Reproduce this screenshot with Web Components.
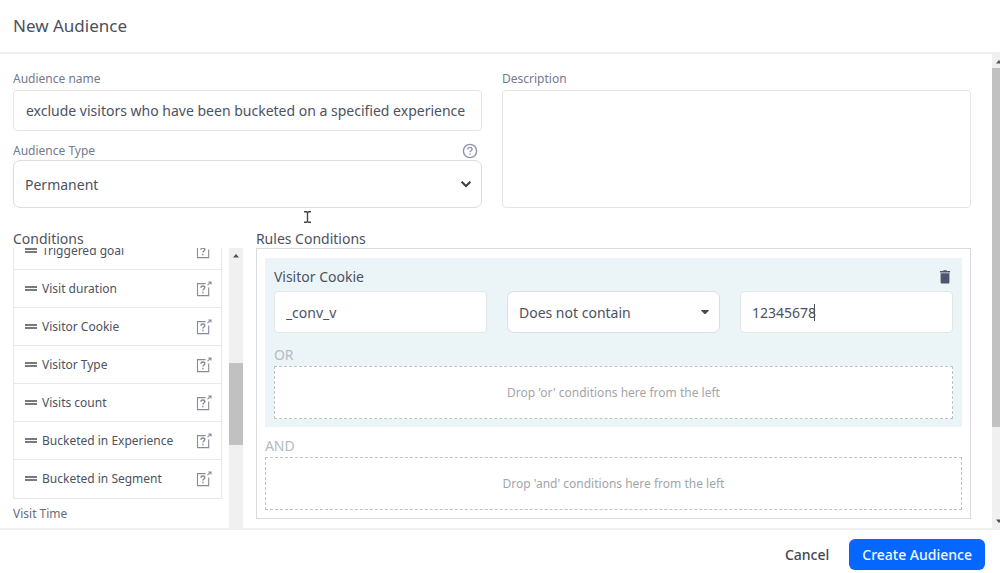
<!DOCTYPE html>
<html lang="en">
<head>
<meta charset="utf-8">
<title>New Audience</title>
<style>
html, body { height: 100%; margin: 0; }
body { background: #fff; color: #4c525f; font: 14px/20px "Noto Sans", "Open Sans", sans-serif; overflow: hidden; }
</style>
</head>
<body>
<audience-dialog></audience-dialog>

<template id="t-dialog">
<style>
:host { display: flex; flex-direction: column; height: 100vh; }
* { box-sizing: border-box; }
header { flex: none; padding: 13px; border-bottom: 2px solid #efeff0; }
h1 { margin: 0; font-size: 17px; line-height: 26px; font-weight: 400; color: #4b505d; }
main { flex: 1; min-height: 0; display: flex; overflow: hidden; }
.content { flex: 1; min-width: 0; display: flex; flex-direction: column; gap: 22px; padding: 16px 21px 0 13px; }
.details { display: grid; grid-template-columns: 1fr 1fr; gap: 20px; }
.stack { display: flex; flex-direction: column; gap: 11px; }
.builder { flex: 1; min-height: 0; display: grid; grid-template-columns: 24% 1fr; grid-template-rows: minmax(0, 1fr); gap: 13px; }
.page-scroll { flex: none; width: 8px; overflow: hidden; }
footer { flex: none; display: flex; justify-content: flex-end; align-items: center; gap: 20px; height: 45px; padding: 6px 15px 0 0; border-top: 2px solid #efeff0; }
.pointer { position: absolute; left: 303px; top: 211px; }
</style>
<header><h1>New Audience</h1></header>
<main>
  <div class="content">
    <div class="details">
      <div class="stack">
        <text-field label="Audience name" value="exclude visitors who have been bucketed on a specified experience"></text-field>
        <select-field label="Audience Type" value="Permanent"></select-field>
      </div>
      <text-field label="Description" multiline></text-field>
    </div>
    <div class="builder">
      <condition-list></condition-list>
      <rules-panel>
        <rule-group name="Visitor Cookie" cookie="_conv_v" operator="Does not contain" match="12345678"></rule-group>
        <drop-zone label="AND">Drop 'and' conditions here from the left</drop-zone>
      </rules-panel>
    </div>
  </div>
  <div class="page-scroll"><scroll-track style="--size:14px;--before:0;--thumb:359;--after:87"></scroll-track></div>
</main>
<footer>
  <action-button>Cancel</action-button>
  <action-button primary>Create Audience</action-button>
</footer>
<svg class="pointer" width="9" height="12" viewBox="0 0 9 12" fill="none" stroke="#454545" stroke-width="1.4" aria-hidden="true"><path d="M1 .8h2.4L4.5 1.4 5.6.8H8M1 11.2h2.4l1.1-.6 1.1.6H8M4.5 1.4v9.2"/></svg>
</template>

<template id="t-text">
<style>
:host { display: flex; flex-direction: column; }
* { box-sizing: border-box; }
label { font-size: 12px; line-height: 18px; color: #747b8b; margin-bottom: 2px; }
input, textarea { width: 100%; height: 41px; margin: 0; border: 1px solid #e4e5e7; border-radius: 4px; background: #fff; padding: 0 12px; font: inherit; color: #4c525f; outline: 0; resize: none; }
:host([bare]) input { height: 42px; padding: 0 11px; }
textarea { flex: 1; padding: 10px 12px; display: block; }
</style>
</template>

<template id="t-select">
<style>
:host { display: block; }
* { box-sizing: border-box; }
.top { display: flex; justify-content: space-between; align-items: center; padding-right: 4px; height: 18px; }
label { font-size: 12px; line-height: 18px; color: #747b8b; }
.box { display: grid; align-items: center; }
.box > * { grid-area: 1 / 1; }
select { appearance: none; width: 100%; height: 48px; margin: 0; border: 1px solid #dcdde0; border-radius: 7px; background: #fff; padding: 2px 11px 0; font: inherit; color: #4c525f; }
.arrow { justify-self: end; margin-right: 10px; pointer-events: none; }
:host([compact]) select { height: 42px; }
:host([compact]) .top, :host([compact]) .chev { display: none; }
:host(:not([compact])) .caret { display: none; }
</style>
<div class="top"><label for="s"></label>
<svg width="16" height="16" viewBox="0 0 16 16" fill="none" stroke="#8e95a9" stroke-width="1.4" aria-hidden="true"><circle cx="8" cy="8" r="6.6"/><path d="M5.9 6.5C5.9 5.1 6.8 4.4 8 4.4s2.1.7 2.1 1.8c0 1.5-2.1 1.5-2.1 3M8 10.4v1.4"/></svg></div>
<div class="box"><select id="s"></select>
<svg class="arrow chev" width="12" height="10" viewBox="0 0 12 10" fill="none" stroke="#3c3f46" stroke-width="2" aria-hidden="true"><path d="M1.6 2.8 6 7l4.4-4.2"/></svg>
<svg class="arrow caret" width="10" height="6" viewBox="0 0 10 6" fill="#434955" aria-hidden="true"><path d="M1 1.6Q1 1 1.6 1h6.8q.6 0 .6.6L5.5 5h-1z"/></svg></div>
</template>

<template id="t-list">
<style>
:host { display: flex; flex-direction: column; min-height: 0; }
* { box-sizing: border-box; }
h2 { flex: none; margin: 0; font-size: 14px; line-height: 18px; font-weight: 400; }
.body { flex: 1; min-height: 0; display: flex; gap: 7px; }
.view { flex: 1; min-width: 0; display: flex; flex-direction: column; justify-content: flex-end; overflow: hidden; }
.list { flex: none; border: 1px solid #e5e6ee; border-top: 0; }
h3 { flex: none; margin: 0; padding: 6px 0 5px; font-size: 12px; line-height: 18px; font-weight: 400; color: #666c79; }
</style>
<h2>Conditions</h2>
<div class="body">
  <div class="view">
    <div class="list" role="list">
      <condition-item role="listitem">Triggered goal</condition-item>
      <condition-item role="listitem">Visit duration</condition-item>
      <condition-item role="listitem">Visitor Cookie</condition-item>
      <condition-item role="listitem">Visitor Type</condition-item>
      <condition-item role="listitem">Visits count</condition-item>
      <condition-item role="listitem">Bucketed in Experience</condition-item>
      <condition-item role="listitem">Bucketed in Segment</condition-item>
    </div>
    <h3>Visit Time</h3>
  </div>
  <scroll-track open-end style="--size:14px;--before:101;--thumb:82;--after:83"></scroll-track>
</div>
</template>

<template id="t-item">
<style>
:host { display: flex; align-items: center; height: 38px; box-sizing: border-box; padding: 0 9px 0 11px; gap: 5px; font-size: 12px; line-height: 18px; border-bottom: 1px solid #e8e9ec; }
:host(:last-child) { border-bottom: 0; }
span { flex: 1; white-space: nowrap; }
svg { flex: none; }
a { display: flex; }
</style>
<svg width="12" height="8" viewBox="0 0 12 8" fill="#777a83" aria-hidden="true"><path d="M0 1h12v2H0zM0 4h12v2H0z"/></svg>
<span><slot></slot></span>
<a href="#help" aria-label="Help"><svg width="16" height="16" viewBox="0 0 16 16" fill="none" stroke="#878b98" stroke-width="1.1" aria-hidden="true"><path d="M9.6 2.6H1.5v12h11.2V6.5M11.5 4.2l3.4-3M12.3 1h2.7v2.6"/><path d="M5 6.7C5 5.5 5.8 5 6.9 5s1.9.5 1.9 1.6c0 1.4-1.9 1.3-1.9 2.9M6.9 10.7v1.5" stroke-width="1.4"/></svg></a>
</template>

<template id="t-scroll">
<style>
:host { display: flex; flex-direction: column; flex: none; width: var(--size); height: 100%; background: #f0f0f0; }
svg { flex: none; }
i { flex: var(--thumb) 1 0; background: #c1c1c1; }
.a { flex: var(--before) 1 0; }
.b { flex: var(--after) 1 0; }
:host([open-end]) .down { display: none; }
</style>
<svg width="14" height="14" viewBox="0 0 14 14" fill="#505050" aria-hidden="true"><path d="M4 9.5 7 6l3 3.5z"/></svg>
<span class="a"></span><i></i><span class="b"></span>
<svg class="down" width="14" height="14" viewBox="0 0 14 14" fill="#505050" aria-hidden="true"><path d="M4 5.5 7 9l3-3.5z"/></svg>
</template>

<template id="t-rules">
<style>
:host { display: block; }
h2 { margin: 0; font-size: 14px; line-height: 18px; font-weight: 400; }
.panel { border: 1px solid #d9dadd; padding: 9px 8px 8px; }
</style>
<h2>Rules Conditions</h2>
<div class="panel"><slot></slot></div>
</template>

<template id="t-group">
<style>
:host { display: block; background: #ebf5f8; padding: 8px 9px; margin-bottom: 7px; }
* { box-sizing: border-box; }
.head { display: flex; justify-content: space-between; align-items: center; height: 22px; margin-bottom: 3px; }
h3 { margin: 0; font-size: 14px; line-height: 20px; font-weight: 400; }
button { display: flex; padding: 0 3px; border: 0; background: none; }
.row { display: grid; grid-template-columns: 1fr 1fr 1fr; gap: 20px; margin-bottom: 10px; }
.value { position: relative; }
.value i { position: absolute; left: 74px; top: 13px; width: 1px; height: 17px; background: #4c525f; }
</style>
<div class="head"><h3></h3><button aria-label="Delete rule"><svg width="10" height="14" viewBox="0 0 10 14" fill="#4d566c" aria-hidden="true"><path d="M0 1h3l.6-.8h2.8L7 1h3v1.4H0zM.6 3.2h8.8v9.3q0 1-1 1H1.6q-1 0-1-1z"/></svg></button></div>
<div class="row"><text-field bare></text-field><select-field compact></select-field><div class="value"><text-field bare></text-field><i></i></div></div>
<drop-zone label="OR">Drop 'or' conditions here from the left</drop-zone>
</template>

<template id="t-drop">
<style>
:host { display: block; color: #b3bbc2; }
.name { display: block; font-size: 14px; line-height: 23px; }
.zone { box-sizing: border-box; display: grid; place-items: center; height: 53px; border: 1px dashed #c0c3c4; background: #fff; font-size: 12px; line-height: 18px; color: #a3a5aa; }
</style>
<span class="name"></span>
<div class="zone"><span><slot></slot></span></div>
</template>

<template id="t-button">
<style>
:host { display: block; }
button { height: 31px; margin: 0; padding: 0; border: 0; border-radius: 6px; background: none; color: #3f4450; font: 500 14px/20px "Noto Sans", "Open Sans", sans-serif; white-space: nowrap; }
:host([primary]) button { background: #0667ff; color: #f4f8ff; padding: 0 13px; }
</style>
<button type="button"><slot></slot></button>
</template>

<script>
class Base extends HTMLElement {
  constructor() {
    super();
    this.attachShadow({ mode: 'open' }).append(
      document.getElementById(this.constructor.template).content.cloneNode(true));
  }
  $(s) { return this.shadowRoot.querySelector(s); }
}
function define(name, template, setup) {
  customElements.define(name, class extends Base {
    static template = template;
    connectedCallback() { if (setup && !this.ready) { this.ready = true; setup.call(this); } }
  });
}
define('scroll-track', 't-scroll');
define('condition-item', 't-item');
define('action-button', 't-button');
define('text-field', 't-text', function () {
  const control = document.createElement(this.hasAttribute('multiline') ? 'textarea' : 'input');
  control.id = 'c';
  control.value = this.getAttribute('value') || '';
  const text = this.getAttribute('label');
  if (this.hasAttribute('bare')) {
    control.setAttribute('aria-label', text || 'Value');
  } else {
    const label = document.createElement('label');
    label.htmlFor = 'c';
    label.textContent = text;
    this.shadowRoot.append(label);
  }
  this.shadowRoot.append(control);
});
define('select-field', 't-select', function () {
  const text = this.getAttribute('label');
  this.$('label').textContent = text || '';
  if (!text) this.$('select').setAttribute('aria-label', 'Operator');
  this.$('select').add(new Option(this.getAttribute('value')));
});
define('drop-zone', 't-drop', function () { this.$('.name').textContent = this.getAttribute('label'); });
define('rule-group', 't-group', function () {
  this.$('h3').textContent = this.getAttribute('name');
  const [cookie, match] = this.shadowRoot.querySelectorAll('text-field');
  const operator = this.$('select-field');
  for (const [el, key] of [[cookie, 'cookie'], [match, 'match']]) {
    el.setAttribute('value', this.getAttribute(key));
    const control = el.shadowRoot.querySelector('input');
    if (control) control.value = this.getAttribute(key);
  }
  operator.setAttribute('value', this.getAttribute('operator'));
  operator.shadowRoot.querySelector('select').replaceChildren(new Option(this.getAttribute('operator')));
});
define('rules-panel', 't-rules');
define('condition-list', 't-list');
define('audience-dialog', 't-dialog');
</script>
</body>
</html>
